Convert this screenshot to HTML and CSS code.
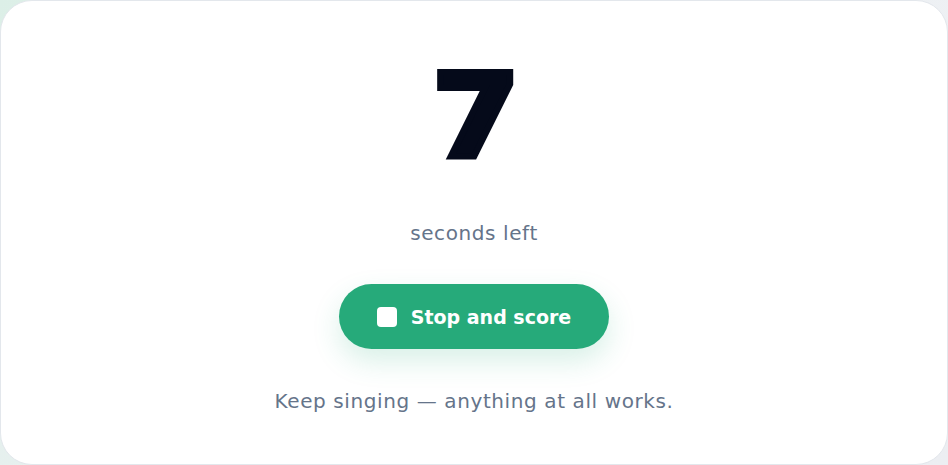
FILE: index.html
```html
<!DOCTYPE html>
<html lang="en">
<head>
<meta charset="utf-8">
<link rel="stylesheet" href="styles.css">
</head>
<body>
<main class="card">
  <div class="count">7</div>
  <div class="label">seconds left</div>
  <button class="stop"><span class="stop-icon"></span><span>Stop and score</span></button>
  <p class="hint">Keep singing — anything at all works.</p>
</main>
</body>
</html>
```
FILE: styles.css
```css
html, body { margin: 0; height: 100%; }
body {
  background: linear-gradient(135deg, #dcefe7 0%, #eef1f4 60%, #eceef2 100%);
  font-family: "DejaVu Sans", sans-serif;
}
.card {
  box-sizing: border-box;
  height: 465px;
  background: #fff;
  border: 1px solid #e3e7ec;
  border-radius: 32px;
  display: flex;
  flex-direction: column;
  align-items: center;
  padding-top: 46px;
}
.count {
  font-family: "DejaVu Sans", sans-serif;
  font-weight: 700;
  font-size: 115px;
  line-height: 140px;
  color: #050a1a;
  -webkit-text-stroke: 6px #050a1a;
  transform: translateX(2px) scaleX(1.1);
  height: 140px;
}
.label {
  margin-top: 32px;
  font-size: 20px;
  letter-spacing: 0.6px;
  line-height: 28px;
  color: #65748a;
}
.stop {
  margin-top: 37px;
  width: 270px;
  height: 65px;
  border: none;
  border-radius: 33px;
  background: #26aa7a;
  color: #fff;
  font-family: "DejaVu Sans", sans-serif;
  font-weight: 700;
  font-size: 19px;
  display: flex;
  align-items: center;
  justify-content: center;
  gap: 14px;
  box-shadow: 0 12px 28px rgba(38, 170, 122, 0.18);
}
.stop-icon {
  width: 20px;
  height: 20px;
  background: #fff;
  border-radius: 4px;
}
.hint {
  margin: 38px 0 0;
  font-size: 20px;
  letter-spacing: 0.6px;
  line-height: 28px;
  color: #65748a;
}
```
